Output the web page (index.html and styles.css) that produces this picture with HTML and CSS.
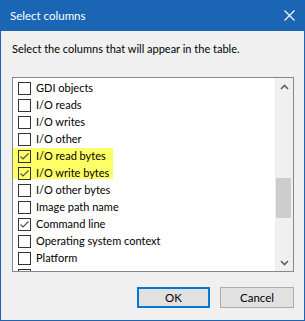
FILE: index.html
```html
<!DOCTYPE html>
<html>
<head>
<meta charset="utf-8">
<link rel="stylesheet" href="styles.css">
</head>
<body>
<div class="window">
  <div class="titlebar">
    <span class="title">Select columns</span>
    <svg class="close" width="11" height="11" viewBox="0 0 11 11"><path d="M0.5 0.5 L10.5 10.5 M10.5 0.5 L0.5 10.5" stroke="#fff" stroke-width="1.1" fill="none"/></svg>
  </div>
  <div class="content">
    <p class="desc">Select the columns that will appear in the table.</p>
    <div class="listbox">
      <div class="items">
        <div class="row"><span class="cb"></span><span class="lbl">GDI objects</span></div>
        <div class="row"><span class="cb"></span><span class="lbl">I/O reads</span></div>
        <div class="row"><span class="cb"></span><span class="lbl">I/O writes</span></div>
        <div class="row"><span class="cb"></span><span class="lbl">I/O other</span></div>
        <div class="hl">
          <div class="row"><span class="cb"><svg width="11" height="11" viewBox="0 0 11 11"><path d="M1.5 5.5 L4 8 L9.5 2.5" stroke="#4d4d4d" stroke-width="1.1" fill="none"/></svg></span><span class="lbl">I/O read bytes</span></div>
          <div class="row"><span class="cb"><svg width="11" height="11" viewBox="0 0 11 11"><path d="M1.5 5.5 L4 8 L9.5 2.5" stroke="#4d4d4d" stroke-width="1.1" fill="none"/></svg></span><span class="lbl">I/O write bytes</span></div>
        </div>
        <div class="row"><span class="cb"></span><span class="lbl">I/O other bytes</span></div>
        <div class="row"><span class="cb"></span><span class="lbl">Image path name</span></div>
        <div class="row"><span class="cb"><svg width="11" height="11" viewBox="0 0 11 11"><path d="M1.5 5.5 L4 8 L9.5 2.5" stroke="#4d4d4d" stroke-width="1.1" fill="none"/></svg></span><span class="lbl">Command line</span></div>
        <div class="row"><span class="cb"></span><span class="lbl">Operating system context</span></div>
        <div class="row"><span class="cb"></span><span class="lbl">Platform</span></div>
        <div class="row"><span class="cb"></span></div>
      </div>
      <div class="scrollbar">
        <div class="sb-btn"><svg width="9" height="6" viewBox="0 0 9 6"><path d="M1 5 L4.5 1.5 L8 5" stroke="#606060" stroke-width="1.6" fill="none"/></svg></div>
        <div class="sb-track"><div class="sb-thumb"></div></div>
        <div class="sb-btn"><svg width="9" height="6" viewBox="0 0 9 6"><path d="M1 1 L4.5 4.5 L8 1" stroke="#606060" stroke-width="1.6" fill="none"/></svg></div>
      </div>
    </div>
    <div class="buttons">
      <button class="btn btn-default">OK</button>
      <button class="btn">Cancel</button>
    </div>
  </div>
</div>
</body>
</html>
```

FILE: styles.css
```css
html, body {
  margin: 0;
  padding: 0;
  background: #f0f0f0;
}
.window {
  width: 305px;
  height: 321px;
  box-sizing: border-box;
  border: 1px solid #1a66b4;
  border-top: none;
  background: #f0f0f0;
  display: flex;
  flex-direction: column;
  font-family: "Segoe UI", Lato, sans-serif;
  font-size: 11px;
  color: #000;
}
.titlebar {
  height: 31px;
  flex: none;
  background: #1a66b4;
  margin: 0 -1px;
  display: flex;
  align-items: center;
  justify-content: space-between;
  padding: 0 10px 0 10px;
}
.title {
  color: #fff;
  font-size: 11.5px;
  line-height: 16px;
  padding-top: 1px;
}
.close {
  display: block;
}
.content {
  flex: 1;
  padding: 10px 10px 0 11px;
  display: flex;
  flex-direction: column;
}
.desc {
  margin: 0;
  line-height: 16px;
}
.listbox {
  margin-top: 20px;
  height: 195px;
  box-sizing: border-box;
  border: 1px solid #828790;
  background: #fff;
  display: flex;
  overflow: hidden;
}
.items {
  flex: 1;
  padding-top: 1px;
  overflow: hidden;
}
.row {
  height: 17px;
  display: flex;
  align-items: flex-start;
  padding-left: 5px;
}
.cb {
  flex: none;
  width: 13px;
  height: 13px;
  box-sizing: border-box;
  border: 1px solid #333;
  margin-top: 3px;
  display: flex;
}
.cb svg {
  display: block;
}
.lbl {
  margin-left: 5px;
  line-height: 17px;
  white-space: nowrap;
}
.hl {
  width: 100px;
  background: linear-gradient(#ffff66, #ffff66) 0 1px / 100% 31px no-repeat;
}
.scrollbar {
  flex: none;
  width: 17px;
  border-left: 1px solid #e6eef7;
  background: #f0f0f0;
  display: flex;
  flex-direction: column;
}
.sb-btn {
  height: 17px;
  flex: none;
  display: flex;
  align-items: center;
  justify-content: center;
}
.sb-btn svg {
  display: block;
}
.sb-track {
  flex: 1;
}
.sb-thumb {
  margin-top: 83px;
  width: 15px;
  height: 40px;
  background: #cdcdcd;
}
.buttons {
  margin-top: 15px;
  display: flex;
  justify-content: flex-end;
  gap: 10px;
}
.btn {
  width: 74px;
  height: 21px;
  box-sizing: border-box;
  border: 1px solid #adadad;
  background: #e1e1e1;
  font-family: "Segoe UI", Lato, sans-serif;
  font-size: 11.5px;
  color: #000;
  padding: 0;
  margin: 0;
}
.btn-default {
  width: 73px;
  border: 2px solid #0078d7;
}
```
